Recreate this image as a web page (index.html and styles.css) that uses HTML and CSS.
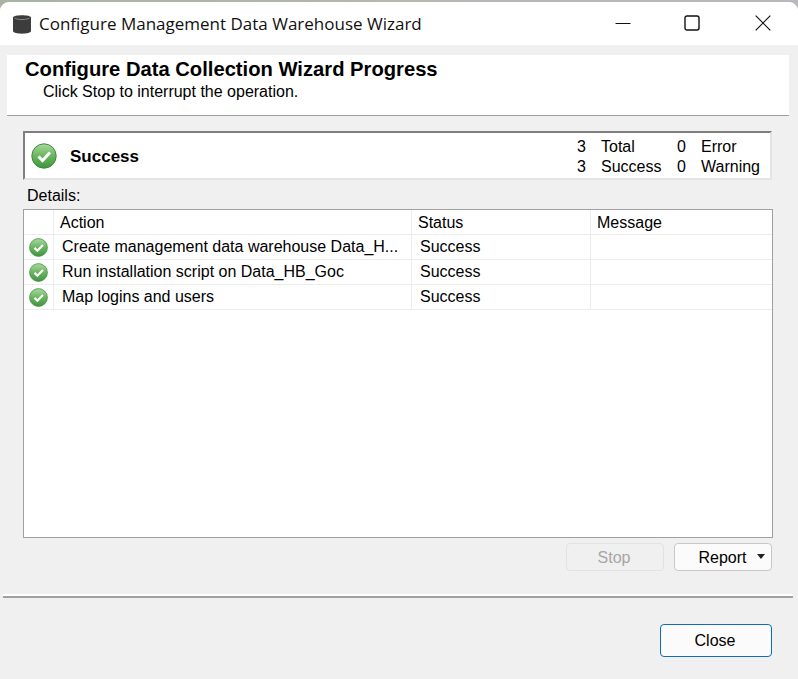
FILE: index.html
```html
<!DOCTYPE html>
<html lang="en">
<head>
    <meta charset="UTF-8">
    <title>Configure Management Data Warehouse Wizard</title>
    <link rel="stylesheet" href="styles.css">
</head>
<body>
    <svg class="defs" width="0" height="0">
        <defs>
            <linearGradient id="okFill" x1="0" y1="0" x2="0" y2="1">
                <stop offset="0" stop-color="#a9d99e"/>
                <stop offset="0.5" stop-color="#6ab560"/>
                <stop offset="1" stop-color="#3f9440"/>
            </linearGradient>
            <symbol id="okIcon" viewBox="0 0 26 26">
                <circle cx="13" cy="13" r="12.2" fill="url(#okFill)" stroke="#3d8a3d" stroke-width="1"/>
                <path d="M7.5 13.5 L11.5 17.5 L19 9.5" fill="none" stroke="#fff" stroke-width="3"/>
            </symbol>
        </defs>
    </svg>

    <div class="window">
        <!-- Title bar -->
        <div class="titlebar">
            <svg class="app-icon" width="20" height="22" viewBox="0 0 20 22">
                <path d="M1 4.5 C1 1.5 19 1.5 19 4.5 V18 C19 21.5 1 21.5 1 18 Z" fill="#3c3c3c"/>
                <path d="M2.5 5 C5 7 15 7 17.5 5" fill="none" stroke="#8a8a8a" stroke-width="1"/>
            </svg>
            <span class="title">Configure Management Data Warehouse Wizard</span>
            <div class="caption-buttons">
                <svg width="16" height="16" viewBox="0 0 16 16"><path d="M0.5 8.5 H15.5" stroke="#111" stroke-width="1"/></svg>
                <svg class="max-icon" width="16" height="16" viewBox="0 0 16 16"><rect x="1" y="1" width="14" height="14" rx="2" fill="none" stroke="#111" stroke-width="1.4"/></svg>
                <svg width="16" height="16" viewBox="0 0 16 16"><path d="M0.7 0.7 L15.3 15.3 M15.3 0.7 L0.7 15.3" stroke="#111" stroke-width="1.2"/></svg>
            </div>
        </div>

        <!-- Page heading -->
        <div class="header">
            <h1>Configure Data Collection Wizard Progress</h1>
            <p>Click Stop to interrupt the operation.</p>
        </div>

        <div class="content">
            <!-- Summary panel -->
            <div class="summary">
                <svg class="summary-icon" width="26" height="26"><use href="#okIcon"/></svg>
                <strong>Success</strong>
                <div class="counts">
                    <span class="num">3</span><span>Total</span><span class="num">0</span><span>Error</span>
                    <span class="num">3</span><span>Success</span><span class="num">0</span><span>Warning</span>
                </div>
            </div>

            <div class="details-label">Details:</div>

            <!-- Action list -->
            <div class="list">
                <table>
                    <colgroup>
                        <col class="col-icon"><col class="col-action"><col class="col-status"><col>
                    </colgroup>
                    <thead>
                        <tr><th></th><th>Action</th><th>Status</th><th>Message</th></tr>
                    </thead>
                    <tbody>
                        <tr>
                            <td class="icon-cell"><svg width="19" height="19"><use href="#okIcon"/></svg></td>
                            <td>Create management data warehouse Data_H...</td><td>Success</td><td></td>
                        </tr>
                        <tr>
                            <td class="icon-cell"><svg width="19" height="19"><use href="#okIcon"/></svg></td>
                            <td>Run installation script on Data_HB_Goc</td><td>Success</td><td></td>
                        </tr>
                        <tr>
                            <td class="icon-cell"><svg width="19" height="19"><use href="#okIcon"/></svg></td>
                            <td>Map logins and users</td><td>Success</td><td></td>
                        </tr>
                    </tbody>
                </table>
            </div>

            <div class="list-buttons">
                <button class="btn stop" disabled>Stop</button>
                <button class="btn report">Report<span class="caret"></span></button>
            </div>
        </div>

        <div class="separator"></div>

        <div class="footer">
            <button class="btn close">Close</button>
        </div>
    </div>
</body>
</html>
```

FILE: styles.css
```css
html, body {
    margin: 0;
    height: 100%;
}

body {
    background: linear-gradient(to right, #a8b3a4 0, #b5b8b2 60%, #b9b9bd 100%);
    font-family: "Liberation Sans", Arial, sans-serif;
    font-size: 16px;
    color: #000;
    overflow: hidden;
}

.defs {
    position: absolute;
}

.window {
    height: 677px;
    margin-top: 2px;
    background-color: #f0f0f0;
    border-radius: 9px 9px 0 0;
    overflow: hidden;
}

/* Title bar */
.titlebar {
    height: 43px;
    background-color: #fff;
    display: flex;
    align-items: center;
    padding-left: 12px;
    box-sizing: border-box;
}

.app-icon {
    margin-right: 7px;
}

.title {
    font-family: "Open Sans", "Noto Sans", sans-serif;
    font-size: 17px;
    color: #111;
}

.caption-buttons {
    margin-left: auto;
    display: flex;
    gap: 53px;
    padding-right: 27px;
    margin-top: -1px;
}

.max-icon {
    margin-right: 2px;
}

/* Heading */
.header {
    margin: 10px 9px 0 7px;
    height: 60px;
    background-color: #fff;
    border-bottom: 1px solid #a0a0a0;
    padding-left: 18px;
}

.header h1 {
    margin: 0;
    padding-top: 2px;
    font-size: 20.2px;
    line-height: 24px;
    font-weight: bold;
}

.header p {
    margin: 0;
    padding: 1px 0 0 18px;
    line-height: 20px;
}

.content {
    padding: 15px 26px 0 23px;
}

/* Summary panel */
.summary {
    height: 49px;
    box-sizing: border-box;
    background-color: #fff;
    border: 2px solid #e4e4e4;
    border-top-color: #7f7f7f;
    border-left-color: #7f7f7f;
    display: flex;
    align-items: center;
    padding: 3px 0 0 6px;
}

.summary strong {
    margin-left: 13px;
    font-size: 17px;
}

.summary-icon {
    flex: none;
    margin-top: -2px;
}

.counts {
    margin-left: auto;
    margin-right: 10px;
    display: grid;
    grid-template-columns: 10px 60px 10px auto;
    column-gap: 15px;
    line-height: 20px;
}

.counts .num {
    text-align: right;
}

.details-label {
    padding: 6px 0 0 4px;
    line-height: 20px;
    height: 23px;
}

/* Action list */
.list {
    height: 329px;
    box-sizing: border-box;
    background-color: #fff;
    border: 1px solid #a0a0a0;
    margin-right: -1px;
}

table {
    width: 100%;
    border-collapse: collapse;
    table-layout: fixed;
}

.col-icon {
    width: 29px;
}

.col-action {
    width: 358px;
}

.col-status {
    width: 179px;
}

th, td {
    height: 25px;
    padding: 0 0 0 8.5px;
    box-sizing: border-box;
    border-right: 1px solid #ececec;
    border-bottom: 1px solid #ececec;
    font-weight: normal;
    text-align: left;
    white-space: nowrap;
    overflow: hidden;
}

th {
    height: 24px;
    padding: 3px 0 0 6.5px;
}

th:last-child, td:last-child {
    border-right: none;
}

.icon-cell {
    padding: 1px 0 0 5px;
    line-height: 0;
}

/* Buttons */
.list-buttons {
    display: flex;
    justify-content: flex-end;
    gap: 10px;
    margin-top: 5px;
}

.btn {
    width: 98px;
    height: 28px;
    padding: 0;
    font: inherit;
    color: #000;
    background-color: #fbfbfb;
    border: 1px solid #c8c8c8;
    border-radius: 4px;
}

.btn:disabled {
    color: #a6a6a6;
    background-color: #f0f0f0;
    border-color: #e2e2e2;
}

.stop {
    padding: 2px 2px 0 0;
}

.report {
    position: relative;
    padding: 2px 1px 0 0;
}

.caret {
    position: absolute;
    right: 6px;
    top: 10px;
    border-left: 4px solid transparent;
    border-right: 4px solid transparent;
    border-top: 5px solid #222;
}

.separator {
    margin: 23px 5px 0 3px;
    height: 2px;
    background-color: #a0a0a0;
    border-top: 2px solid #fff;
}

.footer {
    display: flex;
    justify-content: flex-end;
    padding: 26px 26px 0 0;
}

.close {
    width: 112px;
    height: 33px;
    padding-right: 2px;
    border: 1px solid #0f6cbd;
}
```
